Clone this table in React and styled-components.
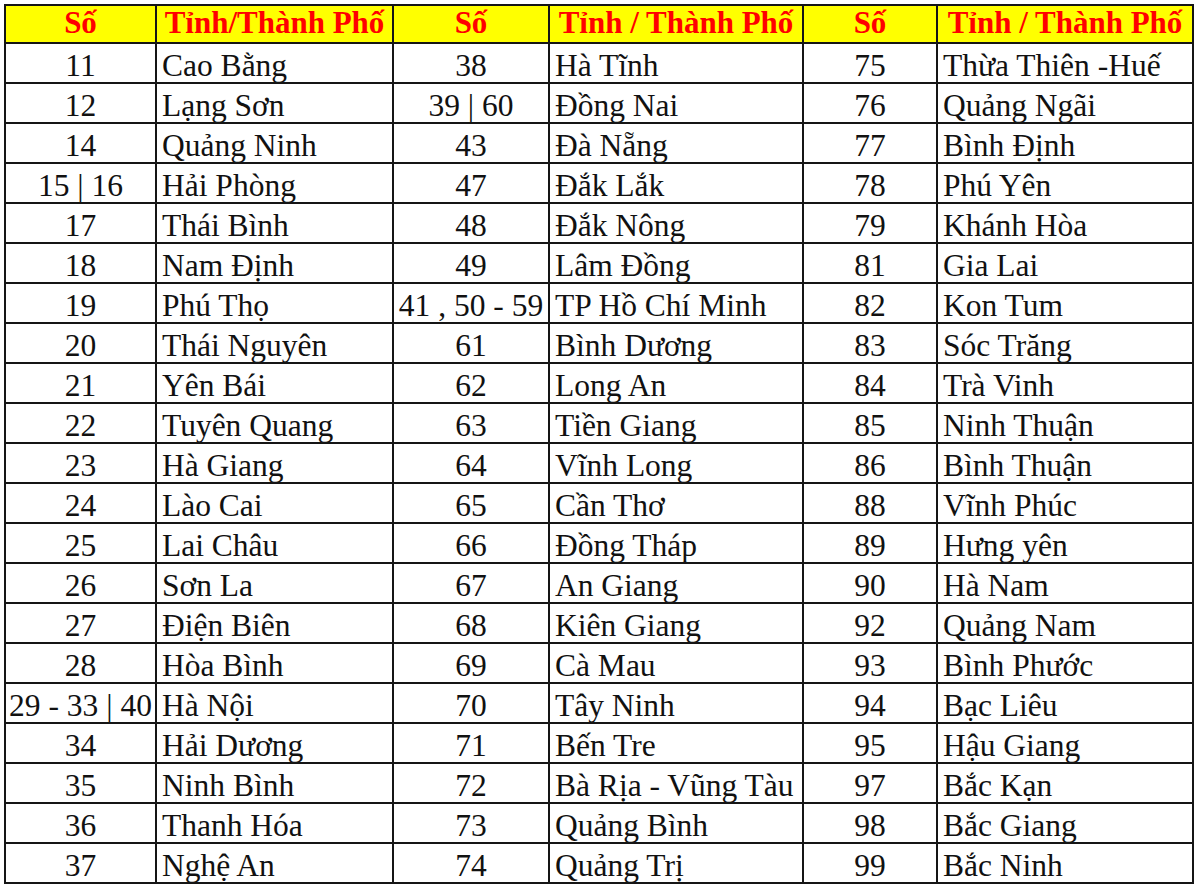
import styled, { createGlobalStyle } from 'styled-components'

const GlobalStyle = createGlobalStyle`
  body {
    margin: 0;
    background: #fff;
  }
`

const Page = styled.div`
  padding: 4px 0 0 4px;
`

// the black background shows through the 2px gaps as the grid lines
const Sheet = styled.div`
  display: inline-grid;
  grid-template-columns: 149px 235px 154px 252px 132px 254px;
  grid-template-rows: 36px;
  grid-auto-rows: 38px;
  gap: 2px;
  padding: 2px;
  background: #151515;
  font-family: 'Liberation Serif', 'Times New Roman', serif;
  font-size: 31.5px;
`

const HeadCell = styled.div`
  background: #ffff00;
  color: #ff0000;
  font-weight: bold;
  font-size: 31px;
  line-height: 34px;
  text-align: center;
  white-space: nowrap;
  overflow: hidden;
`

const Cell = styled.div`
  background: #fff;
  color: #111;
  line-height: 33px;
  padding: 5px ${(p) => (p.$num ? '0' : '5px')} 0;
  text-align: ${(p) => (p.$num ? 'center' : 'left')};
  white-space: nowrap;
  overflow: hidden;
`

const HEADERS = ['Số', 'Tỉnh/Thành Phố', 'Số', 'Tỉnh / Thành Phố', 'Số', 'Tỉnh / Thành Phố']

const COLUMNS = [
  [
    ['11', 'Cao Bằng'],
    ['12', 'Lạng Sơn'],
    ['14', 'Quảng Ninh'],
    ['15 | 16', 'Hải Phòng'],
    ['17', 'Thái Bình'],
    ['18', 'Nam Định'],
    ['19', 'Phú Thọ'],
    ['20', 'Thái Nguyên'],
    ['21', 'Yên Bái'],
    ['22', 'Tuyên Quang'],
    ['23', 'Hà Giang'],
    ['24', 'Lào Cai'],
    ['25', 'Lai Châu'],
    ['26', 'Sơn La'],
    ['27', 'Điện Biên'],
    ['28', 'Hòa Bình'],
    ['29 - 33 | 40', 'Hà Nội'],
    ['34', 'Hải Dương'],
    ['35', 'Ninh Bình'],
    ['36', 'Thanh Hóa'],
    ['37', 'Nghệ An'],
  ],
  [
    ['38', 'Hà Tĩnh'],
    ['39 | 60', 'Đồng Nai'],
    ['43', 'Đà Nẵng'],
    ['47', 'Đắk Lắk'],
    ['48', 'Đắk Nông'],
    ['49', 'Lâm Đồng'],
    ['41 , 50 - 59', 'TP Hồ Chí Minh'],
    ['61', 'Bình Dương'],
    ['62', 'Long An'],
    ['63', 'Tiền Giang'],
    ['64', 'Vĩnh Long'],
    ['65', 'Cần Thơ'],
    ['66', 'Đồng Tháp'],
    ['67', 'An Giang'],
    ['68', 'Kiên Giang'],
    ['69', 'Cà Mau'],
    ['70', 'Tây Ninh'],
    ['71', 'Bến Tre'],
    ['72', 'Bà Rịa - Vũng Tàu'],
    ['73', 'Quảng Bình'],
    ['74', 'Quảng Trị'],
  ],
  [
    ['75', 'Thừa Thiên -Huế'],
    ['76', 'Quảng Ngãi'],
    ['77', 'Bình Định'],
    ['78', 'Phú Yên'],
    ['79', 'Khánh Hòa'],
    ['81', 'Gia Lai'],
    ['82', 'Kon Tum'],
    ['83', 'Sóc Trăng'],
    ['84', 'Trà Vinh'],
    ['85', 'Ninh Thuận'],
    ['86', 'Bình Thuận'],
    ['88', 'Vĩnh Phúc'],
    ['89', 'Hưng yên'],
    ['90', 'Hà Nam'],
    ['92', 'Quảng Nam'],
    ['93', 'Bình Phước'],
    ['94', 'Bạc Liêu'],
    ['95', 'Hậu Giang'],
    ['97', 'Bắc Kạn'],
    ['98', 'Bắc Giang'],
    ['99', 'Bắc Ninh'],
  ],
]

export default function App() {
  const rows = COLUMNS[0].map((_, i) => COLUMNS.map((col) => col[i]))
  return (
    <Page>
      <GlobalStyle />
      <Sheet>
        {HEADERS.map((h, i) => (
          <HeadCell key={'h' + i}>{h}</HeadCell>
        ))}
        {rows.map((row, r) =>
          row.map(([num, name], c) => [
            <Cell key={`${r}-${c}-n`} $num>
              {num}
            </Cell>,
            <Cell key={`${r}-${c}-t`}>{name}</Cell>,
          ])
        )}
      </Sheet>
    </Page>
  )
}
